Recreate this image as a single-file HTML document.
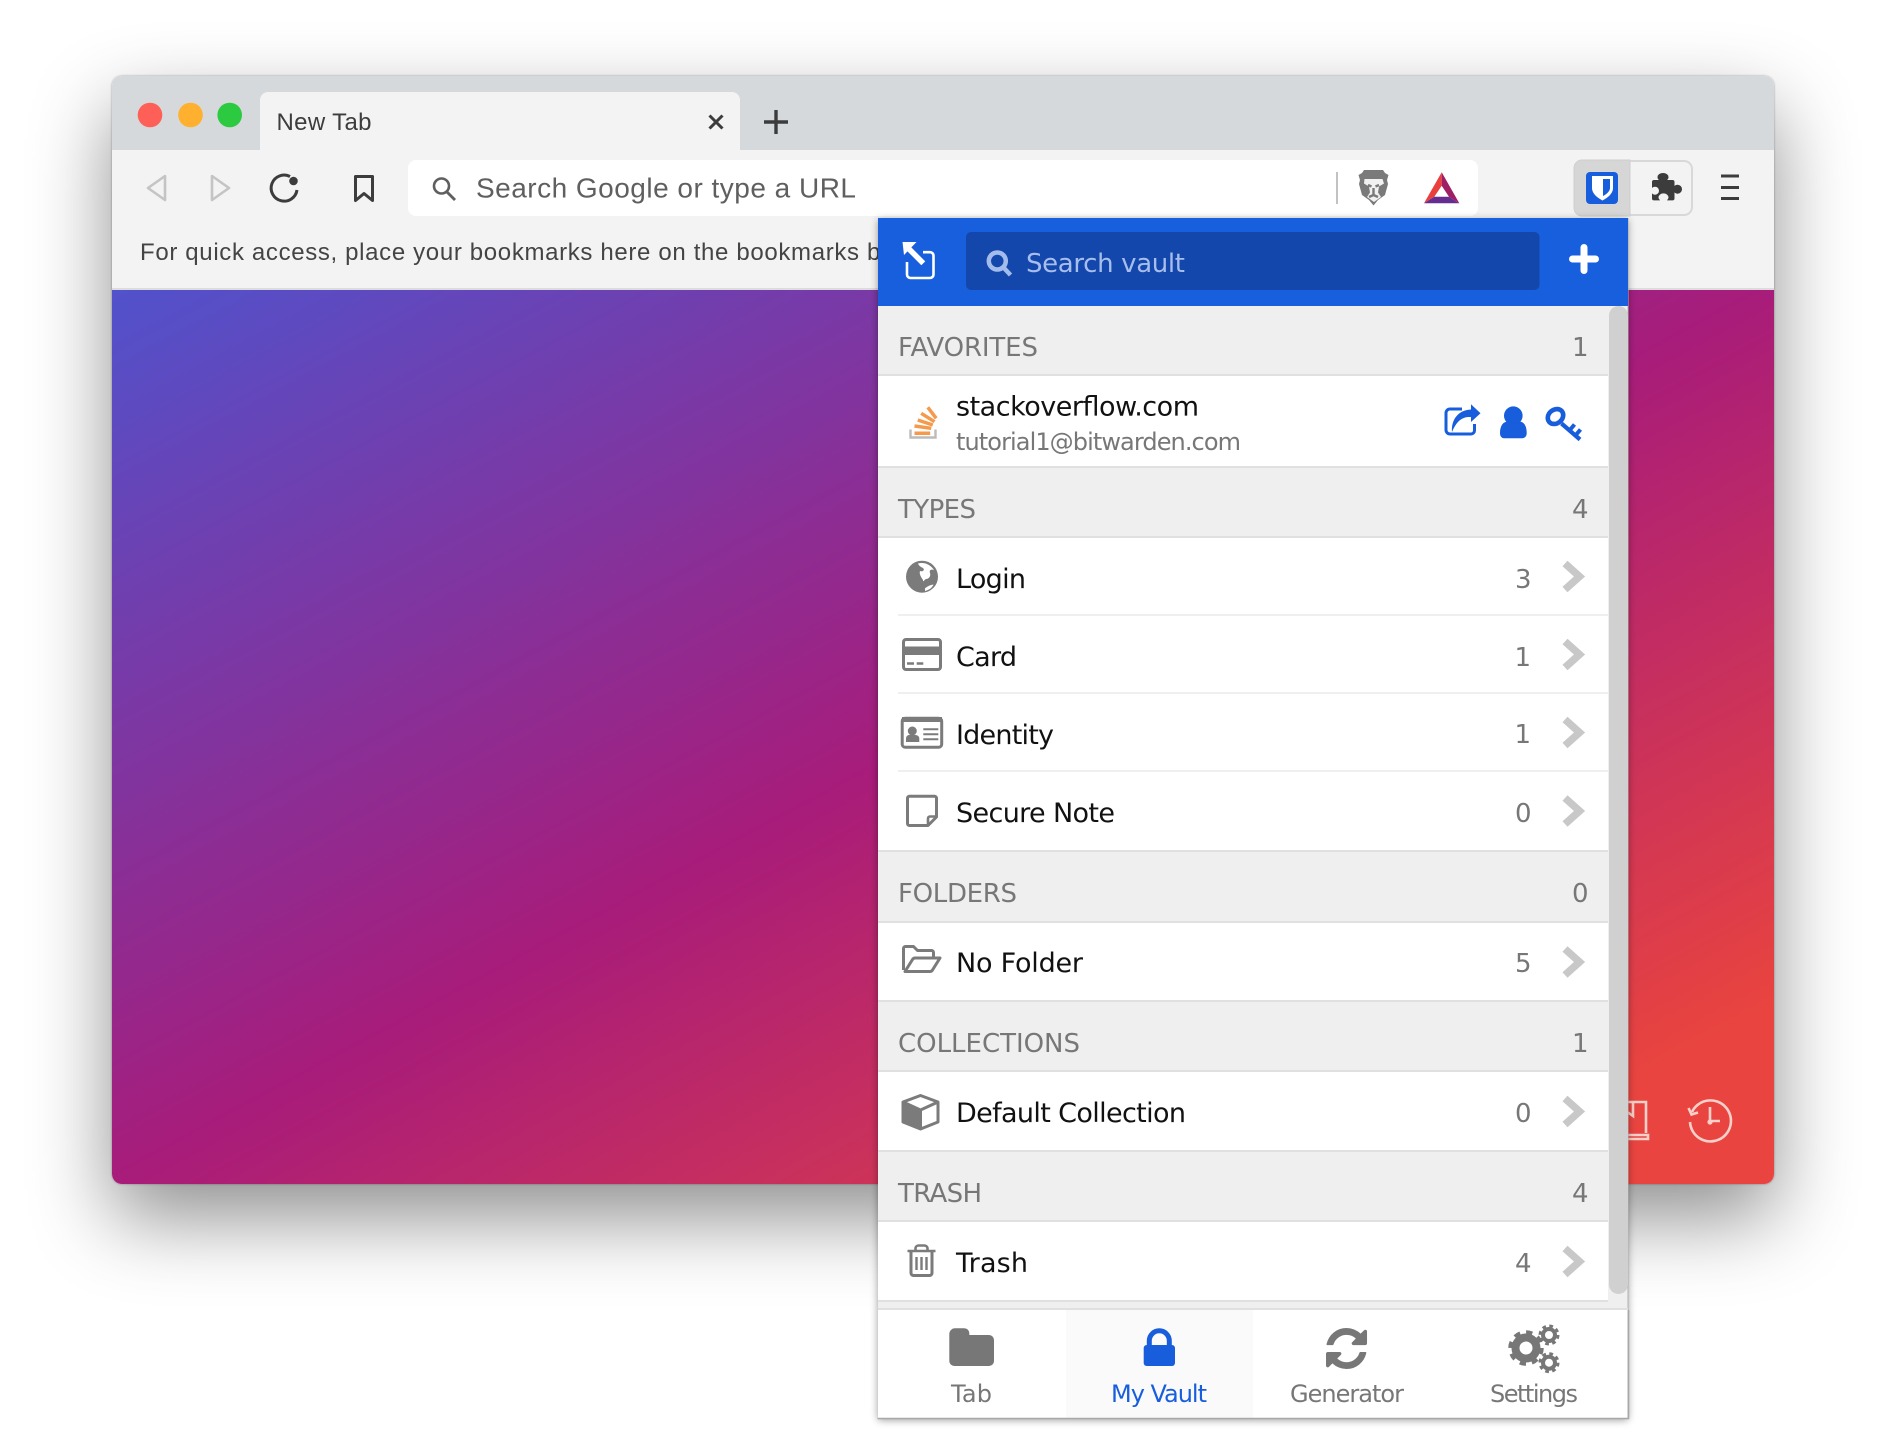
<!DOCTYPE html>
<html lang="en"><head><meta charset="utf-8"><title>Bitwarden vault popup</title>
<style>
html,body{margin:0;padding:0;background:#fff;width:1886px;height:1436px;overflow:hidden}
#win{position:absolute;left:112px;top:76px;width:1662px;height:1108px;border-radius:10px;overflow:hidden;background:#f3f3f3}
#shadow{position:absolute;left:112px;top:76px;width:1662px;height:1108px;border-radius:10px;box-shadow:0 34px 80px rgba(0,0,0,.44),0 0 2px rgba(0,0,0,.35)}
#strip{position:absolute;left:0;top:0;width:100%;height:74px;background:#d6d9dc}
#tab{position:absolute;left:148px;top:16px;width:480px;height:58px;background:#f3f3f3;border-radius:8px 8px 0 0}
#line{position:absolute;left:0;top:212px;width:100%;height:2px;background:#dcdcdc}
#grad{position:absolute;left:0;top:214px;width:100%;height:894px;background:linear-gradient(to bottom right,#5152cc 0%,#a81c7a 50%,#e9443f 90%,#e9443f 100%)}
svg{position:absolute;left:0;top:0}
text{font-family:"DejaVu Sans",sans-serif;white-space:pre}
.c{font-family:"Liberation Sans",sans-serif}
.h{font-size:26px;fill:#777}
.r{font-size:27px;fill:#111}
.n{font-size:26px;fill:#777}
.f{font-size:24px;fill:#777}
</style></head><body>
<div id="shadow"></div>
<div id="win"><div id="strip"></div><div id="tab"></div><div id="line"></div><div id="grad"></div></div>
<svg width="1886" height="1436" viewBox="0 0 1886 1436" xmlns="http://www.w3.org/2000/svg">
<defs>
<filter id="ps" x="-5%" y="-5%" width="110%" height="110%"><feDropShadow dx="0" dy="2" stdDeviation="4" flood-color="#000" flood-opacity=".4"/></filter>
</defs>

<!-- traffic lights -->
<circle cx="150" cy="115" r="12.3" fill="#fe5f57"/>
<circle cx="190.500" cy="115" r="12.3" fill="#ffb02e"/>
<circle cx="229.700" cy="115" r="12.3" fill="#2bca41"/>
<text class="c" x="276.500" y="130" font-size="24" fill="#3d3d3d" textLength="95" lengthAdjust="spacing">New Tab</text>
<path d="M709.500 115.500l13 13M722.500 115.500l-13 13" stroke="#3c3c3c" stroke-width="3" fill="none"/>
<path d="M776 110v24M764 122h24" stroke="#3c3c3c" stroke-width="3.400" fill="none"/>

<!-- toolbar -->
<path d="M165 176L148 188L165 200Z" fill="none" stroke="#c4c4c4" stroke-width="2.600" stroke-linejoin="round"/>
<path d="M212 176L229 188L212 200Z" fill="none" stroke="#c4c4c4" stroke-width="2.600" stroke-linejoin="round"/>
<path d="M290 176.500A13 13 0 1 0 297 190" fill="none" stroke="#3c3c3c" stroke-width="3"/>
<circle cx="293.500" cy="181" r="4.300" fill="#3c3c3c"/>
<path d="M355.500 176.500h17v24l-8.500-7-8.500 7z" fill="none" stroke="#3c3c3c" stroke-width="3" stroke-linejoin="round"/>
<rect x="408" y="160" width="1070" height="56" rx="8" fill="#fff"/>
<circle cx="441.500" cy="186" r="7.500" fill="none" stroke="#5f5f5f" stroke-width="2.600"/>
<path d="M447 192l8 8" stroke="#5f5f5f" stroke-width="2.800"/>
<text class="c" x="476" y="197.500" font-size="28" fill="#5f5f5f" textLength="380" lengthAdjust="spacing">Search Google or type a URL</text>
<rect x="1336" y="172" width="2" height="32" fill="#c2c2c2"/>
<path d="M1364 170H1383L1385 173L1388.500 175L1387 180L1388 184L1385 195L1378 200L1373.500 205.500L1369 200L1362 195L1359 184L1360 180L1358.500 175L1362 173Z" fill="#7a7a7a"/>
<path d="M1364.500 179h18l1.500 4.500-5 3-1 6 3 4.500-7 5-7-5 3-4.500-1-6-5-3z" fill="#f1f1f1"/>
<path d="M1368 185l3.500 1.500M1379 185l-3.500 1.500M1373.500 188v8M1369 197l4.500-2 4.500 2" stroke="#7a7a7a" stroke-width="2.400" fill="none"/>
<path d="M1441.700 172.300L1424 203.300L1434.300 196.700L1441.700 185.700Z" fill="#e9403d"/>
<path d="M1441.700 172.300L1459.300 203.300L1449 196.700L1441.700 185.700Z" fill="#9e1f63"/>
<path d="M1424 203.300H1459.300L1449 196.700H1434.300Z" fill="#662d91"/>
<text class="c" x="140" y="260" font-size="24" fill="#444" textLength="719" lengthAdjust="spacing">For quick access, place your bookmarks here on the bookmarks</text>
<text class="c" x="867" y="260" font-size="24" fill="#444">bar.</text>
<rect x="1575.300" y="161" width="116.700" height="54" rx="8" fill="none" stroke="#d8d8d8" stroke-width="2"/>
<path d="M1630 160H1582a8 8 0 0 0-8 8v40a8 8 0 0 0 8 8h48z" fill="#d6d6d6" stroke="#cfcfcf" stroke-width="1"/>
<rect x="1586" y="172" width="32" height="32" rx="4" fill="#175ddc"/>
<path d="M1592 176H1613V188C1613 194 1607 198 1602.500 200.500C1598 198 1592 194 1592 188Z" fill="#fff"/>
<path d="M1603 179H1610V188C1610 191.500 1606 194.500 1603 196Z" fill="#175ddc"/>
<path transform="translate(-2 0)" d="M1656 180h5c-1.500-1-1.500-2.500-1.500-3a5.500 4 0 0 1 11 0c0 .5 0 2-1.500 3h5.500a2 2 0 0 1 2 2v4c1-1 2-1.300 3-1.300a4.500 4.500 0 0 1 0 9c-1 0-2-.3-3-1.300v6a2 2 0 0 1-2 2h-5.500c1-1.500 1.500-2 1.500-3a5 4 0 0 0-10 0c0 1 .5 1.500 1.500 3H1656a2 2 0 0 1-2-2v-5c1 1 2 1.300 3 1.300a4 4 0 0 0 0-8c-1 0-2 .3-3 1.300V182a2 2 0 0 1 2-2z" fill="#3c3c3c"/>
<path d="M1721 176h18M1721 187.500h18M1721 198.500h18" stroke="#3c3c3c" stroke-width="3" fill="none"/>

<!-- new tab page icons behind popup -->
<g fill="none" stroke="#f8cfc9" stroke-width="2.600">
<path d="M1620 1102H1646V1133M1620 1135H1648V1139H1620M1633 1102V1116L1626 1111"/>
<path d="M1692 1112A20.500 20.500 0 1 1 1690 1122"/>
<path d="M1688.500 1108l3 6.500 6.500-2M1710 1107v15M1710 1121h10"/>
</g>
<circle cx="1710" cy="1122" r="2.600" fill="#f8cfc9"/>

<!-- popup -->
<g filter="url(#ps)"><rect x="878" y="218" width="750" height="1200" fill="#efefef"/></g>
<path d="M878 1418H1628V218" fill="none" stroke="#b0b0b0" stroke-width="1"/>
<rect x="878" y="218" width="750" height="88" fill="#175fdd"/>
<path d="M923.300 263.300L908 248" stroke="#fff" stroke-width="5.500" fill="none"/>
<path d="M902.500 242H916.500L904 255Z" fill="#fff"/>
<path d="M923 252.200h7a3.500 3.500 0 0 1 3.500 3.500V274.500a3.500 3.500 0 0 1-3.500 3.500H910.500a3.500 3.500 0 0 1-3.500-3.500V262" fill="none" stroke="#fff" stroke-width="2.600"/>
<rect x="966" y="232" width="573.500" height="58" rx="5" fill="#1347ab"/>
<circle cx="997.300" cy="261" r="8.500" fill="none" stroke="#a4bcec" stroke-width="4.500"/>
<path d="M1003.500 267.500l7 7.500" stroke="#a4bcec" stroke-width="4.500"/>
<text x="1026" y="272" font-size="26" fill="#a7bdeb" textLength="159" lengthAdjust="spacing">Search vault</text>
<path d="M1584 247.500v23M1572.500 259h23" stroke="#fff" stroke-width="7" stroke-linecap="round" fill="none"/>

<!-- white rows -->
<g fill="#fff">
<rect x="878" y="376" width="730" height="90"/>
<rect x="878" y="538" width="730" height="312"/>
<rect x="878" y="923" width="730" height="77"/>
<rect x="878" y="1072" width="730" height="78"/>
<rect x="878" y="1222" width="730" height="78"/>
</g>
<g fill="#e0e0e0">
<rect x="878" y="374" width="730" height="2"/>
<rect x="878" y="466" width="730" height="2"/>
<rect x="878" y="536" width="730" height="2"/>
<rect x="878" y="850" width="730" height="2"/>
<rect x="878" y="921" width="730" height="2"/>
<rect x="878" y="1000" width="730" height="2"/>
<rect x="878" y="1070" width="730" height="2"/>
<rect x="878" y="1150" width="730" height="2"/>
<rect x="878" y="1220" width="730" height="2"/>
<rect x="878" y="1300" width="730" height="2"/>
<rect x="878" y="1308" width="750" height="2"/>
</g>
<g fill="#efefef">
<rect x="898" y="614" width="710" height="2"/>
<rect x="898" y="692" width="710" height="2"/>
<rect x="898" y="770" width="710" height="2"/>
</g>
<rect x="1609" y="306" width="19" height="988" rx="9.500" fill="#d0d0d0"/>

<!-- section headers -->
<text class="h" x="898" y="356" textLength="140" lengthAdjust="spacing">FAVORITES</text>
<text class="h" x="1572" y="356">1</text>
<text class="h" x="898" y="518" textLength="78" lengthAdjust="spacing">TYPES</text>
<text class="h" x="1572" y="518">4</text>
<text class="h" x="898" y="902" textLength="119" lengthAdjust="spacing">FOLDERS</text>
<text class="h" x="1572" y="902">0</text>
<text class="h" x="898" y="1052" textLength="182" lengthAdjust="spacing">COLLECTIONS</text>
<text class="h" x="1572" y="1052">1</text>
<text class="h" x="898" y="1202" textLength="84" lengthAdjust="spacing">TRASH</text>
<text class="h" x="1572" y="1202">4</text>

<!-- favorite row -->
<path d="M910.500 429.500v8h25v-8" fill="none" stroke="#bcbbbb" stroke-width="2.400"/>
<g stroke="#f59a4c" stroke-width="3.500" fill="none">
<path d="M914.500 433.300h15.700M914.500 426l16.700 2.300M917.800 420l15 5M921.200 413.300l13.300 8.400M927.800 407.300l8.400 11"/>
</g>
<text class="r" x="956" y="415.500" textLength="243" lengthAdjust="spacing">stackoverflow.com</text>
<text x="956" y="450" font-size="24" fill="#777" textLength="285" lengthAdjust="spacing">tutorial1@bitwarden.com</text>
<path d="M1462 409h-12a4 4 0 0 0-4 4V430a4 4 0 0 0 4 4h21a3.500 3.500 0 0 0 3.500-3.500V424" fill="none" stroke="#175ddc" stroke-width="3"/>
<path d="M1452 432C1451 420 1458 410 1471 409.500V404.300L1480.500 413.300L1471 422V417C1463 416.500 1457 420 1452 432Z" fill="#175ddc"/>
<circle cx="1513.300" cy="415.700" r="9.300" fill="#175ddc"/>
<path d="M1500 433c0-7 3-11.500 8-11.500c3 2.500 8 2.500 11 0c5 0 7.700 4.500 7.700 11.500c0 3.500-2 5.300-5 5.300h-17c-3 0-4.700-1.800-4.700-5.300z" fill="#175ddc"/>
<g fill="none" stroke="#175ddc">
<ellipse cx="1555.500" cy="416.500" rx="8.300" ry="6.800" transform="rotate(-40 1555.500 416.500)" stroke-width="4.600"/>
<path d="M1561.500 423.500L1580 439.500" stroke-width="4.200"/>
<path d="M1569 431l5.500-6.500M1575 436l5.500-6.500" stroke-width="4"/>
</g>

<!-- row icons -->
<circle cx="922" cy="576.700" r="16" fill="#7b7b7b"/>
<path d="M918 563.500C924 562 930 564 934 570C931 569 929 570 930 573C931 576 929 579 926 579C924 580 923 583 923 580C921 577 919 574 920 571C923 572 925 570 923 568C921 567 919 566 918 563.500Z" fill="#fff"/>
<path d="M925 588.300C928 586 930 585 933.500 584.500C932 588 929 590 925 591Z" fill="#fff"/>
<rect x="903.500" y="639.500" width="37" height="30" rx="2.500" fill="none" stroke="#7b7b7b" stroke-width="3"/>
<rect x="903" y="646.500" width="38" height="8.500" fill="#7b7b7b"/>
<path d="M907 663.500h7M916.700 663.500h6.600" stroke="#7b7b7b" stroke-width="2.400"/>
<rect x="902.200" y="718.200" width="39.500" height="29" rx="3" fill="none" stroke="#7b7b7b" stroke-width="3"/>
<rect x="902" y="717" width="40" height="5" fill="#7b7b7b"/>
<circle cx="912.300" cy="731" r="4.500" fill="#7b7b7b"/>
<path d="M906 742v-3.500c0-2 1.500-3.500 3-3.500h6.500c2 0 3.800 1.500 3.800 3.500V742z" fill="#7b7b7b"/>
<path d="M923.300 729.300h15M923.300 734.300h15M923.300 739.300h15" stroke="#7b7b7b" stroke-width="2"/>
<path d="M909.500 796.200h25a2 2 0 0 1 2 2V817l-8.500 8.500H909.500a2 2 0 0 1-2-2V798.200a2 2 0 0 1 2-2z" fill="none" stroke="#7b7b7b" stroke-width="3" stroke-linejoin="round"/>
<path d="M936.500 816.500H930a2 2 0 0 0-2 2v7" fill="none" stroke="#7b7b7b" stroke-width="2.600"/>
<path d="M903.500 970V948.500a2 2 0 0 1 2-2h8l4 4h14a2 2 0 0 1 2 2v5" fill="none" stroke="#7b7b7b" stroke-width="3" stroke-linejoin="round"/>
<path d="M905 971.500L912.500 959.500a3 3 0 0 1 2.500-1.500h25L932.500 970a3 3 0 0 1-2.500 1.500H905z" fill="none" stroke="#7b7b7b" stroke-width="3" stroke-linejoin="round"/>
<path d="M903 1102L920.500 1110V1129L903 1122Z" fill="#7b7b7b"/>
<path d="M920.500 1095.500L938 1102V1122L920.500 1129L903 1122V1102ZM903 1102L920.500 1110L938 1102M920.500 1110V1129" fill="none" stroke="#7b7b7b" stroke-width="3" stroke-linejoin="round"/>
<g fill="none" stroke="#7b7b7b">
<path d="M907.500 1251h28M915.500 1250.500v-2a3 3 0 0 1 3-3h6a3 3 0 0 1 3 3v2" stroke-width="2.600"/>
<path d="M911 1251.500V1273a2.500 2.500 0 0 0 2.500 2.500h16a2.500 2.500 0 0 0 2.500-2.500V1251.500" stroke-width="3"/>
<path d="M916.500 1257v13M921.500 1257v13M926.500 1257v13" stroke-width="2.400"/>
</g>

<!-- row labels -->
<text class="r" x="956" y="588" textLength="70" lengthAdjust="spacing">Login</text>
<text class="r" x="956" y="666" textLength="61" lengthAdjust="spacing">Card</text>
<text class="r" x="956" y="744" textLength="98" lengthAdjust="spacing">Identity</text>
<text class="r" x="956" y="822" textLength="159" lengthAdjust="spacing">Secure Note</text>
<text class="r" x="956" y="972" textLength="127" lengthAdjust="spacing">No Folder</text>
<text class="r" x="956" y="1122" textLength="230" lengthAdjust="spacing">Default Collection</text>
<text class="r" x="956" y="1272" textLength="72" lengthAdjust="spacing">Trash</text>

<!-- row counts -->
<text class="n" x="1515" y="588">3</text>
<text class="n" x="1514.500" y="666">1</text>
<text class="n" x="1514.500" y="743">1</text>
<text class="n" x="1515" y="822">0</text>
<text class="n" x="1515" y="972">5</text>
<text class="n" x="1515" y="1122">0</text>
<text class="n" x="1515" y="1272">4</text>

<!-- chevrons -->
<g fill="none" stroke="#c8c8c8" stroke-width="7.500">
<path d="M1565 563.500l14.500 13-14.500 13"/>
<path d="M1565 641.500l14.500 13-14.500 13"/>
<path d="M1565 719.500l14.500 13-14.500 13"/>
<path d="M1565 798l14.500 13-14.500 13"/>
<path d="M1565 949l14.500 13-14.500 13"/>
<path d="M1565 1098.500l14.500 13-14.500 13"/>
<path d="M1565 1248.500l14.500 13-14.500 13"/>
</g>

<!-- footer -->
<rect x="878" y="1310" width="749.500" height="108" fill="#fff"/>
<rect x="1066" y="1310" width="187" height="108" fill="#fafafa"/>
<path d="M877.500 1418.500H1628.500V1310" fill="none" stroke="#a8a8a8" stroke-width="1.500"/>
<path d="M955 1328.300h9c3 0 5.300 2 5.300 5V1335h19.700a5 5 0 0 1 5 5v21a5 5 0 0 1-5 5H954.300a5 5 0 0 1-5-5V1334a5.700 5.700 0 0 1 5.700-5.700z" fill="#777"/>
<path d="M1149.300 1346v-5.200a10 10 0 0 1 20 0V1346" fill="none" stroke="#175ddc" stroke-width="5"/>
<rect x="1143.700" y="1345" width="31.300" height="21" rx="3" fill="#175ddc"/>
<path transform="translate(1322.600 1324.600) scale(.0267)" fill="#777" d="M1639 1056q0 5-1 7-64 268-268 434.500t-478 166.500q-146 0-282.500-55t-243.500-157l-129 129q-19 19-45 19t-45-19-19-45v-448q0-26 19-45t45-19h448q26 0 45 19t19 45-19 45l-137 137q71 66 161 102t187 36q134 0 250-65t186-179q11-17 53-117 8-23 30-23h192q13 0 22.500 9.500t9.500 22.500zm25-800v448q0 26-19 45t-45 19h-448q-26 0-45-19t-19-45 19-45l138-138q-148-137-349-137-134 0-250 65t-186 179q-11 17-53 117-8 23-30 23h-199q-13 0-22.500-9.500t-9.500-22.500v-7q65-268 270-434.500t480-166.500q146 0 284 55.500t245 156.500l130-129q19-19 45-19t45 19 19 45z"/>
<g fill="none" stroke="#777">
<circle cx="1526" cy="1348" r="10.500" stroke-width="8"/>
<circle cx="1526" cy="1348" r="15" stroke-width="5.500" stroke-dasharray="6 5.780"/>
<circle cx="1549" cy="1335" r="6" stroke-width="4"/>
<circle cx="1549" cy="1335" r="8.500" stroke-width="4" stroke-dasharray="3.500 3.180"/>
<circle cx="1549" cy="1362.700" r="6" stroke-width="4"/>
<circle cx="1549" cy="1362.700" r="8.500" stroke-width="4" stroke-dasharray="3.500 3.180"/>
</g>
<text class="f" x="951" y="1402" textLength="41" lengthAdjust="spacing">Tab</text>
<text class="f" x="1111" y="1402" style="fill:#175ddc" textLength="96" lengthAdjust="spacing">My Vault</text>
<text class="f" x="1290" y="1402" textLength="114" lengthAdjust="spacing">Generator</text>
<text class="f" x="1490" y="1402" textLength="88" lengthAdjust="spacing">Settings</text>
</svg>
</body></html>
